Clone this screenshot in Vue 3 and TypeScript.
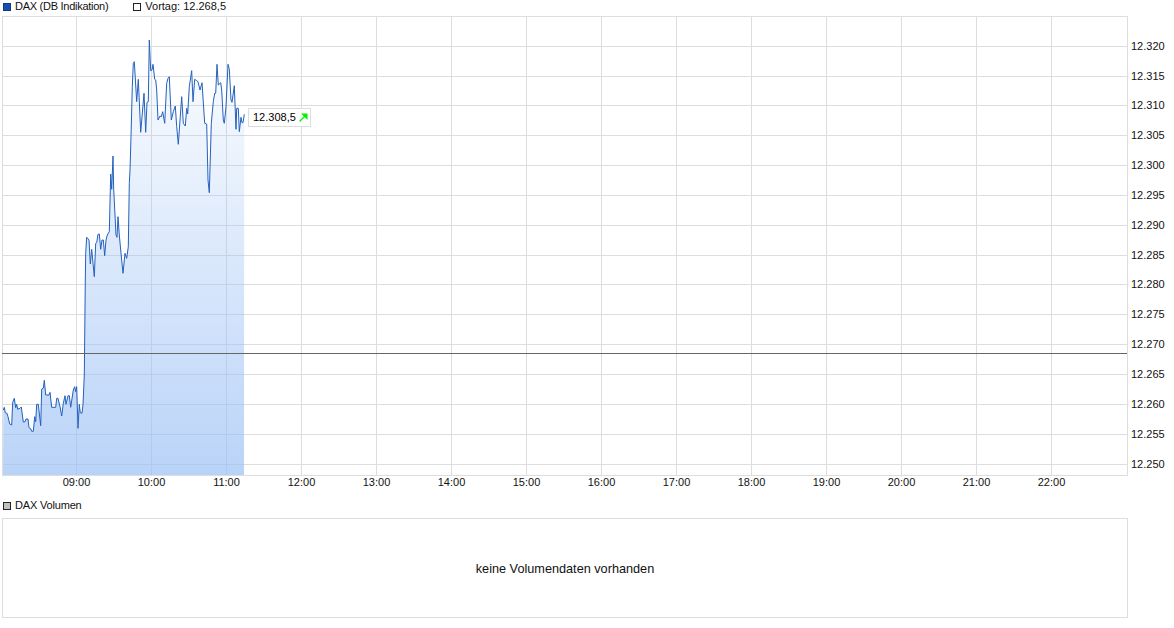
<script setup lang="ts">
type Crop = { x: number; y: number; pts: number[][] };

// Traced in segments, each given in 3x coordinates relative to its origin.
const crops: Crop[] = [
  { x: 0, y: 375, pts: [[10,105],[13,97],[16,113],[21,115],[24,125],[29,147],[35,150],[38,82],[43,70],[47,98],[50,88],[53,103],[60,100],[64,96],[70,141],[75,140],[78,132],[84,132],[87,158],[92,161],[95,169],[100,169],[104,125],[107,140],[110,88],[115,88],[122,152],[125,42],[130,40],[133,16],[137,60],[147,60],[150,52],[155,97],[167,97],[170,70],[174,70],[180,95],[185,123],[190,85],[195,62],[198,88],[204,62],[208,62],[212,97],[220,45],[224,35],[227,50],[230,35],[234,160],[238,88],[241,113],[246,115],[249,88],[253,0]] },
  { x: 70, y: 150, pts: [[46,390],[47,310],[50,262],[57,270],[61,342],[65,298],[73,380],[77,280],[80,278],[84,253],[88,252],[92,298],[96,270],[100,270],[104,317],[108,270],[112,255],[118,245],[122,72],[125,118],[129,18],[131,118],[138,255],[141,262],[144,200],[148,255],[152,300],[159,370],[165,310],[170,325],[175,290],[178,100]] },
  { x: 100, y: 30, pts: [[90,420],[93,320],[97,170],[100,100],[103,95],[110,215],[115,148],[122,307],[132,190],[137,307],[141,217],[145,215],[148,30],[152,122],[156,120],[159,103],[164,148],[167,150],[170,180],[174,270],[180,258],[184,260],[188,245],[194,280],[200,160],[204,145],[208,140],[214,270],[220,245],[226,228],[230,290],[235,343],[245,200],[250,280],[256,288],[260,235],[263,252],[268,170],[275,122],[279,215],[284,148],[290,152],[294,155],[300,180],[306,158],[314,280],[320,282],[324,450],[328,488],[334,280],[340,215],[344,190],[347,190],[351,103],[355,165],[362,158],[365,180],[370,270],[373,280],[378,230],[384,103],[388,118],[393,210],[396,217],[403,167],[408,298],[410,235],[415,235],[418,305],[423,262],[426,278],[429,278],[433,253]] },
];

const points = crops.flatMap((c) =>
  c.pts.map(([px, py]) => [+(c.x + px / 3).toFixed(1), +(c.y + py / 3).toFixed(1)]),
);
const line = points.map((p) => p.join(",")).join(" ");
const area = `3,475 ${line} 244,475`;

const gridY = [46, 76, 105, 135, 165, 195, 225, 255, 284, 314, 344, 374, 404, 434, 464];
const prices = gridY.map((y, i) => {
  const value = 12320 - i * 5;
  return { label: `${Math.floor(value / 1000)}.${String(value % 1000).padStart(3, "0")}`, y: y + 0.5 };
});
const hours = Array.from({ length: 14 }, (_, i) => ({
  label: `${String(9 + i).padStart(2, "0")}:00`,
  x: 76.5 + i * 75,
}));
</script>

<template>
  <div class="page">
    <div class="legend legend-top">
      <span class="item"><i class="swatch blue"></i><span class="name-dax">DAX (DB Indikation)</span></span>
      <span class="item"><i class="swatch white"></i>Vortag: 12.268,5</span>
    </div>

    <div class="chart">
      <svg class="plot" width="1174" height="481" viewBox="0 16 1174 481">
        <defs>
          <linearGradient id="fade" gradientUnits="userSpaceOnUse" x1="0" y1="40" x2="0" y2="475">
            <stop offset="0" stop-color="#9bc0f5" stop-opacity="0.02" />
            <stop offset="1" stop-color="#9bc0f5" stop-opacity="0.7" />
          </linearGradient>
        </defs>

        <rect x="2.5" y="16.5" width="1125" height="459" fill="#fff" stroke="#ddd" />
        <g stroke="#ddd">
          <line v-for="p in prices" :key="p.label" x1="3" x2="1127" :y1="p.y" :y2="p.y" />
          <line v-for="h in hours" :key="h.label" y1="17" y2="475" :x1="h.x" :x2="h.x" />
        </g>

        <polygon :points="area" fill="url(#fade)" />
        <polyline :points="line" fill="none" stroke="#2461bd" stroke-width="1" stroke-linejoin="round" />
        <line x1="2" x2="1127" y1="353.5" y2="353.5" stroke="#666" />

        <g class="axis">
          <text v-for="p in prices" :key="p.label" x="1131" :y="p.y + 3.5">{{ p.label }}</text>
          <text v-for="h in hours" :key="h.label" :x="h.x" y="486" text-anchor="middle">{{ h.label }}</text>
        </g>
      </svg>

      <div class="tip">
        12.308,5
        <svg class="arrow" width="9" height="9" viewBox="0 0 9 9">
          <path d="M0.5 8.5 L6 3" stroke="#00f000" stroke-width="1.3" fill="none" />
          <path d="M2 0.5 H8.5 V7 Z" fill="#00f000" />
        </svg>
      </div>
    </div>

    <div class="legend legend-bottom">
      <span class="item"><i class="swatch gray"></i><span class="name-vol">DAX Volumen</span></span>
    </div>

    <div class="volume">keine Volumendaten vorhanden</div>
  </div>
</template>

<style scoped>
.page {
  width: 1174px;
  height: 628px;
  background: #fff;
  color: #000;
  font-family: "Liberation Sans", Arial, sans-serif;
  font-size: 11px;
  overflow: hidden;
}
.legend {
  display: flex;
  align-items: center;
  gap: 25px;
  padding-left: 3px;
  height: 12px;
}
.legend-top {
  margin-bottom: 4px;
}
.legend-bottom {
  height: 16px;
  margin-bottom: 5px;
}
.name-dax {
  letter-spacing: -0.27px;
}
.name-vol {
  letter-spacing: -0.18px;
}
.item {
  display: flex;
  align-items: center;
  gap: 4px;
  color: #111;
}
.swatch {
  display: block;
  box-sizing: border-box;
  width: 8px;
  height: 8px;
  margin-top: 1px;
  border: 1px solid #222;
}
.blue {
  background: #1550b0;
  border-color: #123a80;
}
.white {
  background: #fff;
}
.gray {
  background: #c0c0c0;
}
.chart {
  position: relative;
  height: 481px;
}
.plot {
  display: block;
}
.axis text {
  font-family: "Liberation Sans", Arial, sans-serif;
  font-size: 11px;
  fill: #111;
}
.tip {
  position: absolute;
  left: 248px;
  top: 92px;
  box-sizing: border-box;
  width: 63px;
  height: 19px;
  display: flex;
  align-items: center;
  gap: 3px;
  padding: 0 0 1px 4px;
  background: #fff;
  border: 1px solid #ddd;
  white-space: nowrap;
}
.arrow {
  display: block;
  margin-top: 1px;
}
.volume {
  box-sizing: border-box;
  margin-left: 2px;
  width: 1126px;
  height: 100px;
  padding-top: 1px;
  border: 1px solid #ddd;
  display: flex;
  align-items: center;
  justify-content: center;
  font-size: 12.7px;
  color: #111;
}
</style>
